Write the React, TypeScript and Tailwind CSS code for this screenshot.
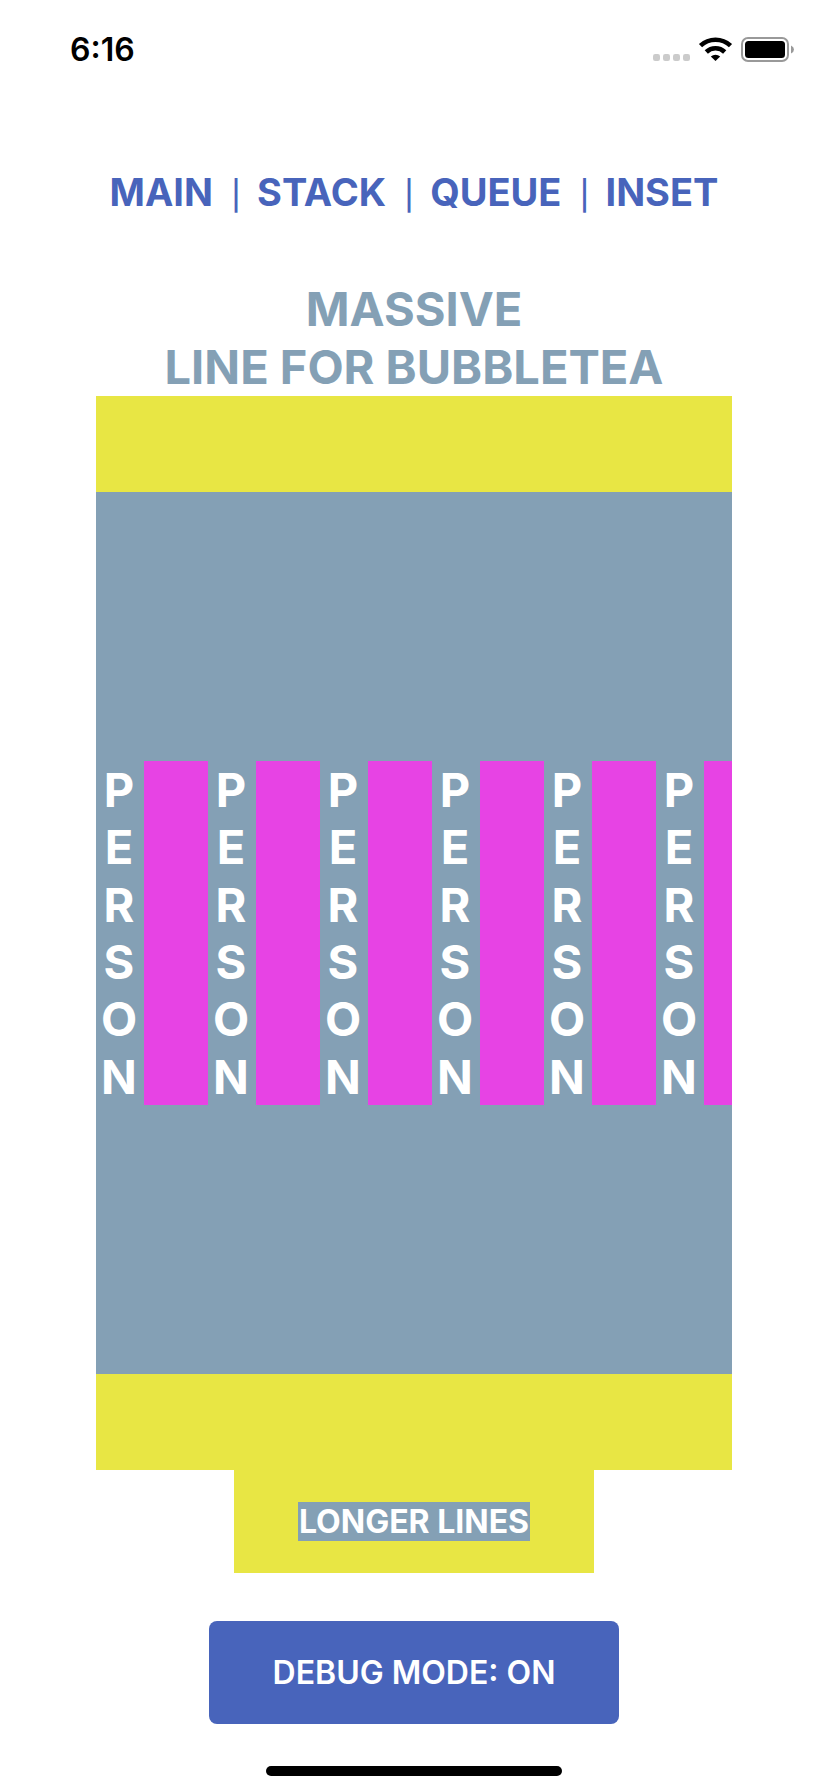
const people = [1, 2, 3, 4, 5, 6];
const letters = ["P", "E", "R", "S", "O", "N"];
const links = ["MAIN", "STACK", "QUEUE", "INSET"];

function StatusBar() {
  return (
    <header className="flex h-[100px] items-center justify-between pr-[34px] pl-[70px]">
      <time className="text-[32px] leading-10 font-semibold text-black">6:16</time>
      <svg className="h-7 w-[142px]" viewBox="652 36 142 28" role="img" aria-label="Wi-Fi on, battery full">
        <g fill="#cbcbcb">
          <rect x="653" y="54" width="7" height="7" rx="2.2" />
          <rect x="663" y="54" width="7" height="7" rx="2.2" />
          <rect x="673" y="54" width="7" height="7" rx="2.2" />
          <rect x="683" y="54" width="7" height="7" rx="2.2" />
        </g>
        <g fill="none" stroke="#000" strokeWidth="4.6">
          <path d="M700.5 45.6 A22 22 0 0 1 730.5 45.6" />
          <path d="M706.3 52 A13.2 13.2 0 0 1 724.7 52" />
        </g>
        <path d="M715.5 61 L710.8 56.6 A7 7 0 0 1 720.2 56.6 Z" />
        <rect x="742" y="38" width="46" height="23" rx="6" fill="none" stroke="#999" strokeWidth="2" />
        <rect x="745" y="41" width="40" height="17" rx="3.5" />
        <path d="M791 45.5 Q794 47 794 49.5 Q794 52 791 53.5 Z" fill="#999" />
      </svg>
    </header>
  );
}

function Person() {
  return (
    <li className="flex shrink-0">
      <div className="grid h-[344px] w-12 grid-rows-6 pr-0.5 text-center text-[47px] leading-[57px] font-bold text-white">
        {letters.map((letter) => (
          <span key={letter} className="flex items-center justify-center">
            {letter}
          </span>
        ))}
      </div>
      <div className="w-16 bg-[#e743e4]" />
    </li>
  );
}

export default function App() {
  return (
    <div className="flex min-h-screen flex-col bg-white font-[Inter,sans-serif]">
      <StatusBar />
      <nav className="mt-[68px] flex h-12 items-baseline justify-center gap-[18px] text-[38px] leading-[48px] font-bold text-[#4864bb]">
        {links.map((link, i) => (
          <div key={link} className="flex items-baseline gap-4">
            {i > 0 && <span className="text-[29px] font-medium">|</span>}
            <a href={`#${link.toLowerCase()}`}>{link}</a>
          </div>
        ))}
      </nav>
      <main className="flex flex-1 flex-col items-center px-24 pt-16">
        <h1 className="text-center text-[47px] leading-[58px] font-bold text-[#84a0b5]">
          MASSIVE
          <br />
          LINE FOR BUBBLETEA
        </h1>
        <div className="flex w-full flex-1 items-center border-y-[96px] border-[#e8e644] bg-[#84a0b5]">
          <ul className="flex w-full overflow-hidden">
            {people.map((id) => (
              <Person key={id} />
            ))}
          </ul>
        </div>
        <button type="button" className="bg-[#e8e644] px-16 py-8 text-[32px] leading-[39px] font-bold text-white">
          <span className="block bg-[#84a0b5] px-px">LONGER LINES</span>
        </button>
        <button type="button" className="mt-12 rounded-lg bg-[#4864bb] px-16 py-8 text-[32px] leading-[39px] font-semibold text-white">
          DEBUG MODE: ON
        </button>
      </main>
      <footer className="flex justify-center pt-[42px] pb-4">
        <div className="h-[10px] w-[296px] rounded-full bg-black" />
      </footer>
    </div>
  );
}
